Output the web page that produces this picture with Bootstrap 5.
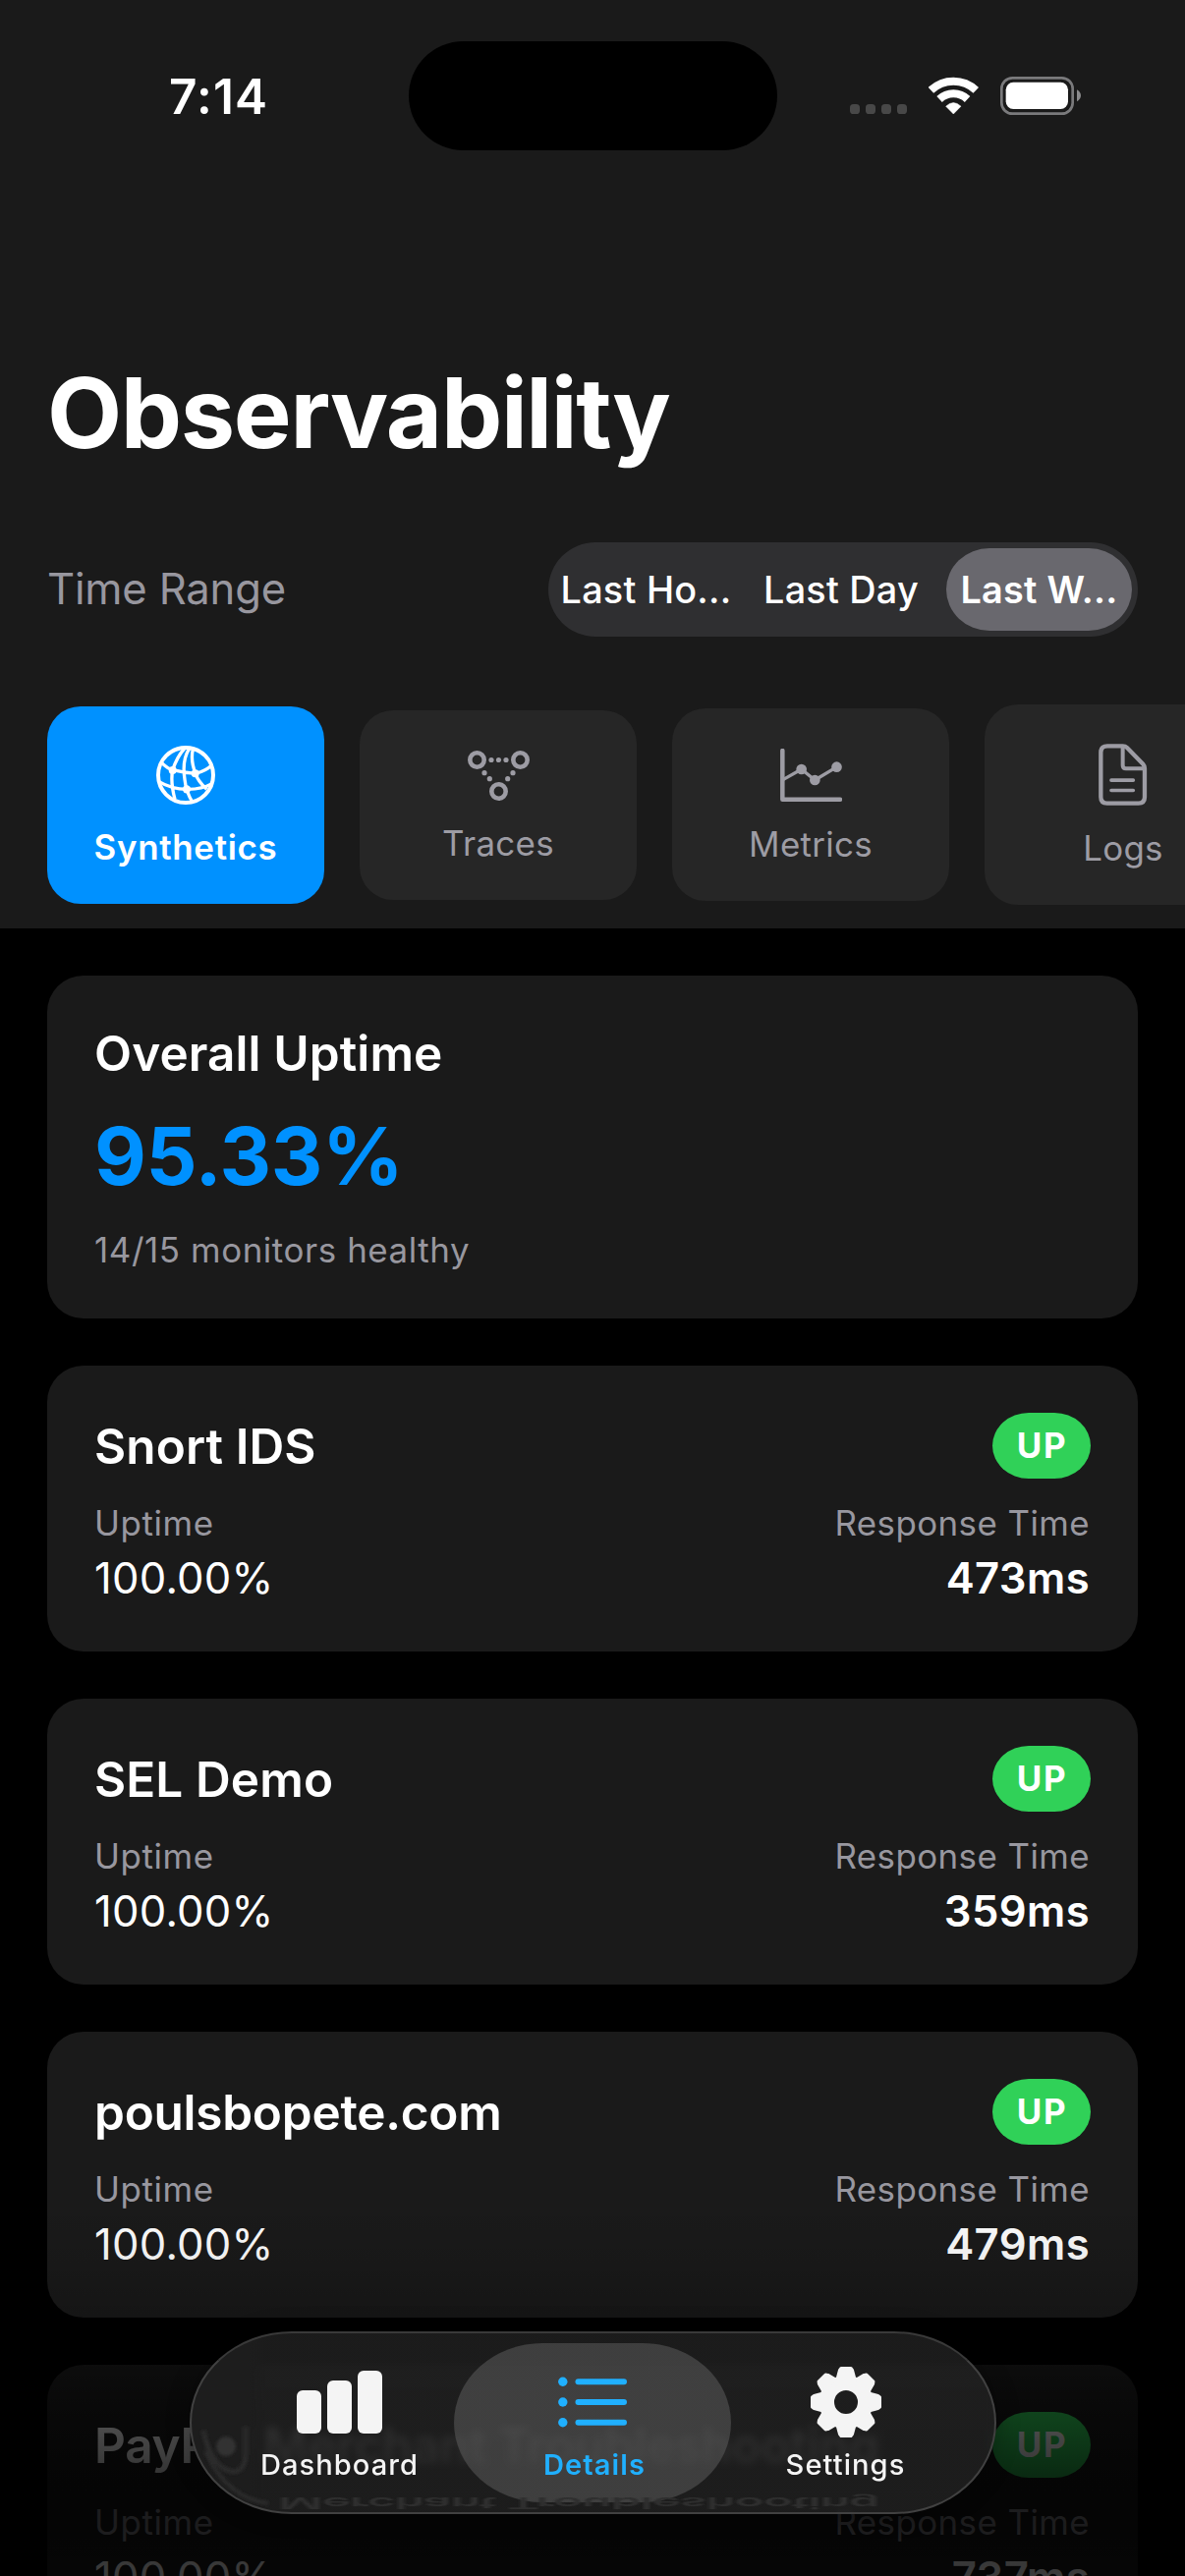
<!DOCTYPE html>
<html lang="en" data-bs-theme="dark">
<head>
<meta charset="utf-8">
<meta name="viewport" content="width=device-width, initial-scale=1">
<title>Observability</title>
<link href="https://cdn.jsdelivr.net/npm/bootstrap@5.3.0/dist/css/bootstrap.min.css" rel="stylesheet">
<style>
body{background:#000;color:#fff;font-family:Inter,"Liberation Sans",sans-serif;height:2622px;overflow:hidden}
svg{display:block;flex:none}
.screen{height:2622px}
.text-dim{color:#98979f}
.app-head{background:#1a1a1a;height:945px}
.status-bar{height:195px}
.status-side{width:415.5px;flex:none}
.status-time{font-size:49.5px;font-weight:600;letter-spacing:1.16px;line-height:60px;padding:1px 0 0 172px}
.island{width:375px;height:111px;background:#000}
.status-icons{padding-right:106px}
.gutter{padding-left:48px;padding-right:48px}
.page-title{font-size:98.9px;font-weight:700;letter-spacing:-1.35px;line-height:120px;margin:165px 0 72px}
.range-label{font-size:43.6px;letter-spacing:-.18px}
.segmented{width:600px;height:96px;padding:6px;background:#2f2f31;font-size:37.8px;letter-spacing:.24px;font-weight:500}
.seg{line-height:84px;white-space:nowrap}
.seg-a{width:187px}
.seg-b{width:212px;padding-right:2px}
.seg.active{width:189px;background:#69686e;border-radius:44px/42px;font-weight:600;letter-spacing:.27px}
.tab-strip{gap:36px;padding-left:48px;margin-top:69px;height:204px;overflow:hidden}
.tile{width:282px;flex:none;background:#262626;border-radius:34px;padding:40px 0 36px;color:#9d9ca4;gap:22px;font-size:34.9px;line-height:43px;letter-spacing:.3px}
.tile.shorter{padding-top:41px}
.tile.active{background:#0091ff;color:#fff;font-weight:600;letter-spacing:.69px}
.feed{padding:48px;gap:48px}
.panel{background:#1a1a1a;border-radius:37px;padding:48px 49px 48px 48px;border:0;color:#fff}
.panel-title{font-size:49.5px;font-weight:600;line-height:62px;letter-spacing:.1px;white-space:nowrap}
.panel-title.tight{letter-spacing:-.25px}
.figure-pct{font-size:81.5px;font-weight:700;letter-spacing:-.33px;line-height:98px;color:#0091ff;margin:25px 0 25px}
.caption-text{font-size:34.9px;line-height:43px;letter-spacing:.42px}
.caption-text.wide{letter-spacing:.58px}
.title-row{height:67px}
.pill{width:100px;height:67px;line-height:67px;border-radius:37px/33.5px;background:#30d158;font-size:34.9px;font-weight:700;letter-spacing:1.8px;padding:0 0 0 1px;margin-right:-1px;flex:none}
.stats{margin-top:24px}
.stat-value{font-size:43.6px;line-height:54px;letter-spacing:.25px;margin:8px 0 -1px}
.stat-value.strong{font-weight:600;letter-spacing:.4px}
.fade-out{left:0;right:0;bottom:0;height:382px;pointer-events:none;background:linear-gradient(to bottom,rgba(0,0,0,0) 0,rgba(0,0,0,.07) 60px,rgba(0,0,0,.2) 119px,rgba(0,0,0,.52) 167px,rgba(0,0,0,.68) 215px,rgba(0,0,0,.8) 280px,rgba(0,0,0,.82) 330px,rgba(0,0,0,.77) 382px)}
.dock{left:192.5px;bottom:63px;width:821px;height:186px;padding:10px;border:2px solid #414141;border-top-color:#393939;border-radius:104px/93px;overflow:hidden;background:linear-gradient(to right,#1d1d1d 58px,rgba(38,38,38,.72) 76px);backdrop-filter:blur(4px);box-shadow:0 0 24px rgba(0,0,0,.3)}
.dock-item{width:282px;height:162px;flex:none;padding-top:24px;color:#f4f4f4;font-size:29.1px;font-weight:500;line-height:36px;letter-spacing:1.05px;position:relative}
.dock-item + .dock-item{margin-left:-24.5px}
.dock-item.active{color:#20b0ff;font-weight:600;letter-spacing:1.1px}
.dock-item.active::before{content:"";position:absolute;inset:0;z-index:-1;border-radius:90px/81px;background:rgba(98,98,98,.5)}
.dock-icon{height:72px;margin-bottom:10px}
.glint{left:0;top:0;width:817px;height:182px;pointer-events:none}
</style>
</head>
<body>
<div class="screen position-relative overflow-hidden">
  <header class="app-head d-flex flex-column">
    <div class="status-bar d-flex align-items-center">
      <div class="status-side status-time">7:14</div>
      <div class="island rounded-pill flex-shrink-0"></div>
      <div class="status-side status-icons d-flex justify-content-end">
        <svg width="58" height="39" viewBox="0 0 58 39" fill="#484848" style="margin-right:22px"><rect y="28" width="10" height="10" rx="3.6"/><rect x="16" y="28" width="10" height="10" rx="3.6"/><rect x="32" y="28" width="10" height="10" rx="3.6"/><rect x="48" y="28" width="10" height="10" rx="3.6"/></svg>
        <svg width="51" height="39" viewBox="375 84 153 117" fill="none" stroke="#fff" style="margin-right:22px"><path d="M382.2 125.5A100 100 0 0 1 519.8 125.5" stroke-width="24"/><path d="M408.3 153A62 62 0 0 1 493.7 153" stroke-width="24"/><path d="M451 198L428 174.500Q451 153 474 174.500Z" fill="#fff" stroke-width="1.500"/></svg>
        <svg width="82" height="39" viewBox="594 84 246 117"><rect x="598" y="88" width="217" height="109" rx="33" fill="none" stroke="#7a7a7c" stroke-width="8"/><rect x="611" y="101" width="190" height="82" rx="23" fill="#fff"/><path d="M828 124Q840 131 840 142Q840 153 828 160Z" fill="#8a8a8c"/></svg>
      </div>
    </div>
    <h1 class="page-title gutter">Observability</h1>
    <div class="gutter d-flex justify-content-between align-items-center">
      <div class="range-label text-dim">Time Range</div>
      <div class="segmented rounded-pill d-flex text-center">
        <div class="seg seg-a">Last Ho...</div>
        <div class="seg seg-b">Last Day</div>
        <div class="seg active">Last W...</div>
      </div>
    </div>
    <nav class="tab-strip d-flex align-items-center">
      <div class="tile active d-flex flex-column align-items-center">
        <svg width="60" height="60" viewBox="27 27 180 180" fill="none" stroke="#fff" stroke-width="10"><circle cx="117" cy="117" r="84" stroke-width="12"/><path d="M113 36Q92 58 77 101Q70 140 84 190M128 36Q105 70 114 130Q118 168 138 200M139 38Q131 72 147 112Q154 136 181 160M41 77Q62 98 77 101Q108 109 147 112Q180 104 197 86M34 136Q75 160 120 160Q165 161 199 142"/><g fill="#fff" stroke="none"><circle cx="77" cy="102" r="12"/><circle cx="146" cy="112" r="12"/><circle cx="120" cy="160" r="12.500"/></g></svg>
        <span>Synthetics</span>
      </div>
      <div class="tile shorter d-flex flex-column align-items-center">
        <svg width="63" height="51" viewBox="0 0 63 51" fill="none" stroke="#9d9ca4" stroke-width="4.600"><circle cx="9.500" cy="9.500" r="7.200"/><circle cx="53.500" cy="9.500" r="7.200"/><circle cx="31.500" cy="41.500" r="7.200"/><g fill="#9d9ca4" stroke="none"><circle cx="24" cy="9.500" r="2.600"/><circle cx="31.500" cy="9.500" r="2.600"/><circle cx="39" cy="9.500" r="2.600"/><circle cx="17" cy="22.700" r="2.600"/><circle cx="22.300" cy="28.700" r="2.600"/><circle cx="46" cy="22.700" r="2.600"/><circle cx="40.700" cy="28.700" r="2.600"/></g></svg>
        <span>Traces</span>
      </div>
      <div class="tile shorter d-flex flex-column align-items-center">
        <svg width="63" height="54" viewBox="42 36 189 162" fill="none" stroke="#9d9ca4" stroke-linecap="round" stroke-linejoin="round"><path d="M49 42V191H225" stroke-width="13.500"/><path d="M52 130L107 99L148 132L215 92" stroke-width="10"/><g fill="#9d9ca4" stroke="none"><circle cx="107" cy="99" r="16"/><circle cx="148" cy="132" r="16"/><circle cx="214.500" cy="92" r="16"/></g></svg>
        <span>Metrics</span>
      </div>
      <div class="tile d-flex flex-column align-items-center">
        <svg width="49.300" height="63" viewBox="1014 21 148 189" fill="none" stroke="#9d9ca4" stroke-linecap="round"><path d="M1041 28H1088Q1096 28 1101 33L1150 83Q1155 88 1155 97V184Q1155 203 1136 203H1040Q1021 203 1021 184V47Q1021 28 1041 28Z" stroke-width="13"/><path d="M1088 30V87Q1088 97 1098 97H1152" stroke-width="12"/><path d="M1053 132.500H1120M1053 163.500H1120" stroke-width="11"/></svg>
        <span>Logs</span>
      </div>
    </nav>
  </header>

  <main class="feed d-flex flex-column">
    <section class="panel">
      <div class="panel-title">Overall Uptime</div>
      <div class="figure-pct">95.33%</div>
      <div class="caption-text wide text-dim">14/15 monitors healthy</div>
    </section>
    <section class="panel">
      <div class="title-row d-flex justify-content-between align-items-center"><div class="panel-title">Snort IDS</div><span class="pill text-center">UP</span></div>
      <div class="stats d-flex justify-content-between">
        <div><div class="caption-text wide text-dim">Uptime</div><div class="stat-value">100.00%</div></div>
        <div class="text-end"><div class="caption-text text-dim">Response Time</div><div class="stat-value strong">473ms</div></div>
      </div>
    </section>
    <section class="panel">
      <div class="title-row d-flex justify-content-between align-items-center"><div class="panel-title">SEL Demo</div><span class="pill text-center">UP</span></div>
      <div class="stats d-flex justify-content-between">
        <div><div class="caption-text wide text-dim">Uptime</div><div class="stat-value">100.00%</div></div>
        <div class="text-end"><div class="caption-text text-dim">Response Time</div><div class="stat-value strong">359ms</div></div>
      </div>
    </section>
    <section class="panel">
      <div class="title-row d-flex justify-content-between align-items-center"><div class="panel-title tight">poulsbopete.com</div><span class="pill text-center">UP</span></div>
      <div class="stats d-flex justify-content-between">
        <div><div class="caption-text wide text-dim">Uptime</div><div class="stat-value">100.00%</div></div>
        <div class="text-end"><div class="caption-text text-dim">Response Time</div><div class="stat-value strong">479ms</div></div>
      </div>
    </section>
    <section class="panel">
      <div class="title-row d-flex justify-content-between align-items-center"><div class="panel-title tight">PayPal Merchant Troubleshooting</div><span class="pill text-center">UP</span></div>
      <div class="stats d-flex justify-content-between">
        <div><div class="caption-text wide text-dim">Uptime</div><div class="stat-value">100.00%</div></div>
        <div class="text-end"><div class="caption-text text-dim">Response Time</div><div class="stat-value strong">737ms</div></div>
      </div>
    </section>
  </main>

  <div class="fade-out position-absolute"></div>

  <nav class="dock position-absolute d-flex">
    <!-- light bent by the rim of the glass -->
    <svg class="glint position-absolute" viewBox="0 0 817 182" aria-hidden="true">
      <defs><filter id="soft" x="-20%" y="-20%" width="140%" height="140%"><feGaussianBlur stdDeviation="1.500"/></filter></defs>
      <g filter="url(#soft)" fill="none" stroke="#2c2c2c">
        <circle cx="35" cy="115" r="10" fill="#303030" stroke="none"/>
        <path d="M55 95V122Q55 139 43 141Q20 138 12 99" stroke-width="5"/>
        <path d="M14 120Q36 168 78 173" stroke-width="4"/>
      </g>
      <text transform="translate(88 167) scale(1 -.33)" textLength="612" lengthAdjust="spacing" font-size="49.500" font-weight="600" fill="#2f2f2f" filter="url(#soft)">Merchant Troubleshooting</text>
    </svg>
    <div class="dock-item d-flex flex-column align-items-center">
      <div class="dock-icon d-flex align-items-center"><svg width="87" height="64" viewBox="0 0 87 64" fill="#f4f4f4"><rect y="20" width="25" height="44" rx="6"/><rect x="31" y="10" width="25" height="54" rx="6"/><rect x="62" width="25" height="64" rx="6"/></svg></div>
      <span>Dashboard</span>
    </div>
    <div class="dock-item active d-flex flex-column align-items-center">
      <div class="dock-icon d-flex align-items-center"><svg width="70" height="52" viewBox="0 0 70 52" fill="#20b0ff"><circle cx="4.800" cy="5.300" r="4.700"/><circle cx="4.800" cy="26" r="4.700"/><circle cx="4.800" cy="46.700" r="4.700"/><rect x="17.500" y="2.300" width="52.500" height="6" rx="3"/><rect x="17.500" y="23" width="52.500" height="6" rx="3"/><rect x="17.500" y="43.700" width="52.500" height="6" rx="3"/></svg></div>
      <span class="ps-1">Details</span>
    </div>
    <div class="dock-item d-flex flex-column align-items-center">
      <div class="dock-icon d-flex align-items-center"><svg width="72" height="72" viewBox="-36 -36 72 72" fill="#f4f4f4" stroke="#f4f4f4" stroke-linejoin="round"><defs><path id="tooth" d="M-5 -34.500H5L6.500 -32.500L8.500 -25L12 -21H-12L-8.500 -25L-6.500 -32.500Z" stroke-width="3"/></defs><circle r="19" fill="none" stroke-width="14"/><use href="#tooth"/><use href="#tooth" transform="rotate(45)"/><use href="#tooth" transform="rotate(90)"/><use href="#tooth" transform="rotate(135)"/><use href="#tooth" transform="rotate(180)"/><use href="#tooth" transform="rotate(225)"/><use href="#tooth" transform="rotate(270)"/><use href="#tooth" transform="rotate(315)"/></svg></div>
      <span>Settings</span>
    </div>
  </nav>
</div>
<script src="https://cdn.jsdelivr.net/npm/bootstrap@5.3.0/dist/js/bootstrap.bundle.min.js"></script>
</body>
</html>
